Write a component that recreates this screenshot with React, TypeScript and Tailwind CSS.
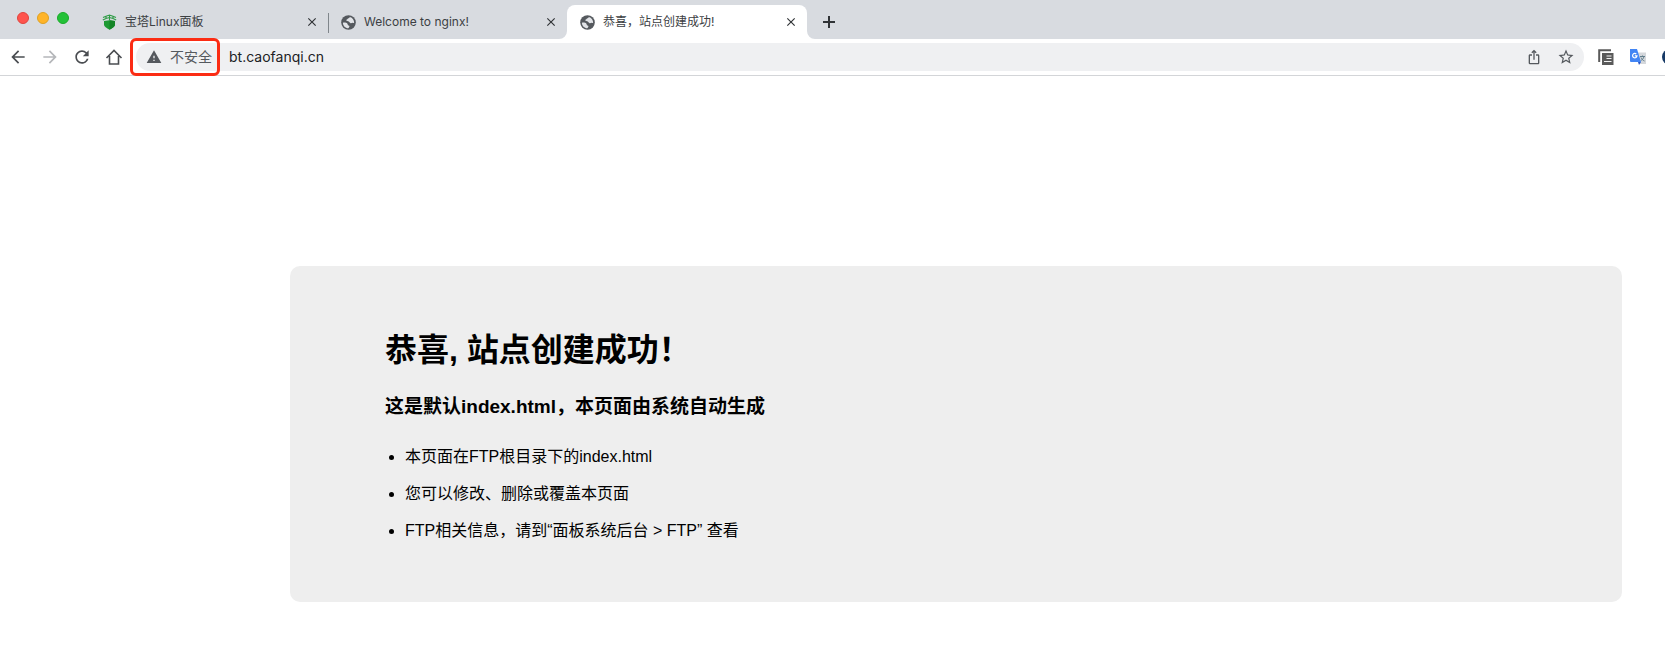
import React from "react";
import { MdArrowBack, MdArrowForward, MdClose, MdRefresh, MdWarning, MdStarBorder, MdIosShare } from "react-icons/md";

const uiFont = "font-['Inter','Noto_Sans_CJK_SC',sans-serif]";
const pageFont = "font-['Liberation_Sans','Noto_Sans_CJK_SC',sans-serif]";

function ShieldIcon() {
  return (
    <svg viewBox="0 0 15 16" className="h-4 w-[15px]" aria-hidden="true">
      <path d="M2 7l5.500-.8L13 7v3.700c0 1.600-2.500 3.300-5.500 5.100C4.500 14 2 12.300 2 10.700Z" fill="#1d9a33" />
      <path d="M7.500 6.200 13 7v3.700c0 1.600-2.500 3.300-5.500 5.100Z" fill="#148527" />
      <path d="M1 3.500 4 2.300 7.500 1 11 2.300l3 1.200M.8 6 4 4.500l3.500-1 3.500 1L14.200 6M4 2.300v2.200M11 2.300v2.200M7.500 1v5" stroke="#2f9c46" strokeWidth="1.100" fill="none" />
    </svg>
  );
}

function GlobeIcon() {
  return (
    <svg viewBox="0 0 16 16" className="size-[15px] shrink-0" aria-hidden="true">
      <circle cx="8" cy="8" r="7.800" fill="#55595e" />
      <path d="M2 8.200c1.600-.5 3.800-.2 4.700.9.800 1 .2 1.800 1.400 2.100.9.200 1.100.8.700 1.600-.3.500-.8.900-1 1.300C4.600 14 2.100 11.500 2 8.200Z" fill="#e2e4e8" />
      <path d="M9.400 2c-.2 1.300-1.800 1.200-2.300 2-.4.700-1.300.7-1.500 1.400-.2.900 1 1.100 1.900 1.200 1.300.1 1.500 1.300 2.400 1.900.9.500 1.800-.2 2.600-.2.700 0 1.200.4 1.500.3C14.200 5.400 12.300 2.800 9.400 2Z" fill="#e2e4e8" />
    </svg>
  );
}

function HomeIcon() {
  return (
    <svg viewBox="0 0 18 18" className="size-[18px]" fill="none" stroke="currentColor" strokeWidth="1.600" aria-hidden="true">
      <path d="M1.500 10 9 2.500l7.500 7.500M4.500 8v8h9V8" />
    </svg>
  );
}

function ReaderIcon() {
  return (
    <svg viewBox="0 0 16 16" className="size-4" aria-hidden="true">
      <path d="M1.200 13V1.200H13" fill="none" stroke="#5a5a5a" strokeWidth="2" />
      <path d="M4 4h11.500v12H4Z" fill="#5a5a5a" />
      <path d="M8.500 7h5M8.500 9.500h5M6 12.500h7.500" stroke="#f4f4f4" strokeWidth="1.200" />
    </svg>
  );
}

function TranslateIcon() {
  return (
    <svg viewBox="0 0 16 16" className="size-4" aria-hidden="true">
      <path d="M7 3.500h9V15H9Z" fill="#d5d8dc" />
      <path d="M10 7.500h5M12.500 6.500v1M14 7.500c-.5 2-2 3.500-3.500 4.500M11 8.500c.5 1.500 2 3 3.500 3.500" stroke="#607d8b" strokeWidth="1" fill="none" />
      <path d="M0 0h7l4 13H1a1 1 0 0 1-1-1Z" fill="#4285f4" />
      <path d="M8 13h3l-2 3Z" fill="#2a56c6" />
      <path d="M6.300 5A2.200 2.200 0 1 0 7 6.800H4.800" fill="none" stroke="#fff" strokeWidth="1.200" />
    </svg>
  );
}

function Tab({ icon, title, active = false, divider = false }: { icon: React.ReactNode; title: string; active?: boolean; divider?: boolean }) {
  return (
    <div
      className={
        active
          ? "relative flex h-[34px] w-60 items-center rounded-t-lg bg-white pl-3 pr-2"
          : "relative flex h-[34px] w-[239px] items-center pl-3 pr-2"
      }
    >
      <span className="flex w-4 shrink-0 justify-center">{icon}</span>
      <span className="ml-2 flex-1 truncate text-xs text-[#3c4043]">{title}</span>
      <button aria-label={`关闭 ${title}`} className="flex size-4 items-center justify-center text-[#303336]">
        <MdClose size={14} />
      </button>
      {divider && <span className="absolute -right-px top-2 h-5 w-px bg-[#80868b]" />}
      {active && (
        <>
          <svg viewBox="0 0 8 8" className="absolute bottom-0 -left-2 size-2" aria-hidden="true"><path d="M8 0v8H0a8 8 0 0 0 8-8Z" fill="#fff" /></svg>
          <svg viewBox="0 0 8 8" className="absolute bottom-0 -right-2 size-2" aria-hidden="true"><path d="M0 0v8h8a8 8 0 0 1-8-8Z" fill="#fff" /></svg>
        </>
      )}
    </div>
  );
}

export default function App() {
  return (
    <div className="min-h-screen overflow-x-hidden bg-white">
      <header className={uiFont}>
        <div className="flex items-end bg-[#d8dbe0] pt-[5px]">
          <div className="flex w-[89px] gap-2 self-start pl-[17px] pt-[7px]">
            <button aria-label="关闭窗口" className="size-3 rounded-full border border-[#e0443e] bg-[#ff544d]" />
            <button aria-label="最小化" className="size-3 rounded-full border border-[#dea123] bg-[#ffb429]" />
            <button aria-label="最大化" className="size-3 rounded-full border border-[#1aab29] bg-[#24c138]" />
          </div>
          <Tab icon={<ShieldIcon />} title="宝塔Linux面板" divider />
          <Tab icon={<GlobeIcon />} title="Welcome to nginx!" />
          <Tab icon={<GlobeIcon />} title="恭喜，站点创建成功!" active />
          <button aria-label="新标签页" className="ml-3 flex h-[34px] items-center text-[#303336]">
            <svg viewBox="0 0 20 20" className="size-5" aria-hidden="true"><path d="M10 4v12M4 10h12" stroke="currentColor" strokeWidth="2" /></svg>
          </button>
        </div>
        <div className="flex h-[37px] items-center border-b border-[#d3d5d8] pl-2 text-[#55595e]">
          <nav className="flex w-32 shrink-0 gap-3">
            <button aria-label="后退" className="text-[#4a4d51]"><MdArrowBack size={20} /></button>
            <button aria-label="前进" className="text-[#b5b7ba]"><MdArrowForward size={20} /></button>
            <button aria-label="重新加载" className="text-[#4a4d51]"><MdRefresh size={20} /></button>
            <button aria-label="主页" className="flex w-5 items-center justify-center text-[#4a4d51]"><HomeIcon /></button>
          </nav>
          <div className="flex h-7 flex-1 items-center rounded-full bg-[#eff0f2] pr-2">
            <button className="relative flex h-7 w-[93px] shrink-0 items-center gap-2 pl-[10px] text-sm whitespace-nowrap">
              <MdWarning size={16} />
              不安全
              <span className="absolute -top-[5px] -left-[6px] h-[38px] w-[90px] rounded-md border-3 border-[#fb2c14]" />
            </button>
            <input aria-label="地址" defaultValue="bt.caofanqi.cn" className="min-w-0 flex-1 bg-transparent text-sm text-[#202124] outline-none" />
            <div className="flex gap-3">
              <button aria-label="分享" className="flex size-5 items-center justify-center"><MdIosShare size={16} /></button>
              <button aria-label="收藏" className="flex size-5 items-center justify-center"><MdStarBorder size={18} /></button>
            </div>
          </div>
          <div className="flex w-[81px] shrink-0 items-center gap-4 overflow-hidden pl-[14px]">
            <button aria-label="阅读"><ReaderIcon /></button>
            <button aria-label="翻译"><TranslateIcon /></button>
            <button aria-label="扩展程序" className="size-4 shrink-0 rounded-full bg-[#173a66]" />
          </div>
        </div>
      </header>
      <main className={`pr-[43px] pl-[290px] pt-[190px] text-black ${pageFont}`}>
        <section className="rounded-[10px] bg-[#eeeeee] px-[95px] pt-[62px] pb-[53px]">
          <h1 className="text-[32px] leading-[45px] font-bold">恭喜, 站点创建成功！</h1>
          <h3 className="mt-5 text-[19px] leading-[28px] font-bold">这是默认index.html，本页面由系统自动生成</h3>
          <ul className="mt-[17px] list-disc pl-5 text-base leading-[37px]">
            <li>本页面在FTP根目录下的index.html</li>
            <li>您可以修改、删除或覆盖本页面</li>
            <li>FTP相关信息，请到“面板系统后台 &gt; FTP” 查看</li>
          </ul>
        </section>
      </main>
    </div>
  );
}
